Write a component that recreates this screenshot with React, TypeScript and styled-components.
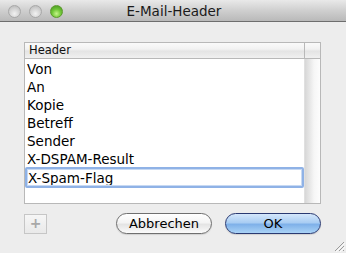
import React from 'react'
import styled, { createGlobalStyle } from 'styled-components'

const headers = ['Von', 'An', 'Kopie', 'Betreff', 'Sender', 'X-DSPAM-Result']

export default function App() {
  return (
    <>
      <Global />
      <S.Window>
        <S.TitleBar>
          <S.Lights>
            <S.Light />
            <S.Light />
            <S.Light green />
          </S.Lights>
          <S.Title>E-Mail-Header</S.Title>
        </S.TitleBar>

        <S.Body>
          <S.Table>
            <S.HeadRow>
              <S.HeadCell>Header</S.HeadCell>
              <S.HeadCorner />
            </S.HeadRow>
            <S.TableBody>
              <S.Rows>
                {headers.map(h => <S.Row key={h}>{h}</S.Row>)}
                <S.EditRow defaultValue='X-Spam-Flag' />
              </S.Rows>
              <S.Scroller />
            </S.TableBody>
          </S.Table>

          <S.Footer>
            <S.PlusButton>+</S.PlusButton>
            <S.Buttons>
              <S.PushButton>Abbrechen</S.PushButton>
              <S.PushButton primary>OK</S.PushButton>
            </S.Buttons>
          </S.Footer>
        </S.Body>

        <S.Grip>
          <svg width='11' height='11' viewBox='0 0 11 11'>
            <path d='M10 1 L1 10 M10 5 L5 10 M10 9 L9 10' stroke='#9a9a9a' strokeWidth='1' />
            <path d='M11 2 L2 11 M11 6 L6 11' stroke='#fafafa' strokeWidth='1' />
          </svg>
        </S.Grip>
      </S.Window>
    </>
  )
}

const Global = createGlobalStyle`
  body { margin: 0; }
  * { box-sizing: border-box; }
`

const S = {
  Window: styled.div`
    position: relative;
    width: 346px;
    height: 253px;
    background: #ededed;
    font-family: 'DejaVu Sans', 'Lucida Grande', sans-serif;
    overflow: hidden;
  `,

  TitleBar: styled.div`
    position: relative;
    height: 22px;
    display: flex;
    align-items: center;
    justify-content: center;
    background: linear-gradient(#e9e9e9, #cfcfcf 50%, #b9b9b9);
    border-bottom: 1px solid #6e6e6e;
  `,

  Lights: styled.div`
    position: absolute;
    left: 8px;
    top: 5px;
    display: flex;
    gap: 8px;
  `,

  Light: styled.div<{ green?: boolean }>`
    width: 13px;
    height: 13px;
    border-radius: 50%;
    border: 1px solid ${({ green }) => green ? '#5c9a2c' : '#a8a8a8'};
    background: ${({ green }) => green
      ? 'radial-gradient(circle at 50% 70%, #c6f58a, #73c83a 45%, #3f8f1c 100%)'
      : 'radial-gradient(circle at 50% 70%, #f2f2f2, #d4d4d4 50%, #b4b4b4 100%)'};
  `,

  Title: styled.div`
    font-size: 13.5px;
    color: #1a1a1a;
    padding-left: 2px;
  `,

  Body: styled.div`
    padding: 20px 25px 0 24px;
  `,

  Table: styled.div`
    height: 162px;
    border: 1px solid #b8b8b8;
    background: #fff;
    display: flex;
    flex-direction: column;
  `,

  HeadRow: styled.div`
    height: 16px;
    display: flex;
    border-bottom: 1px solid #b8b8b8;
    background: linear-gradient(#fafafa, #f2f2f2 40%, #e4e4e4 55%, #f0f0f0);
  `,

  HeadCell: styled.div`
    flex: 1;
    font-size: 11.5px;
    line-height: 15px;
    padding-left: 4px;
    color: #111;
    border-right: 1px solid #b8b8b8;
  `,

  HeadCorner: styled.div`
    width: 15px;
  `,

  TableBody: styled.div`
    flex: 1;
    display: flex;
  `,

  Rows: styled.div`
    flex: 1;
    padding-top: 1px;
  `,

  Row: styled.div`
    height: 18px;
    line-height: 18px;
    padding-left: 2px;
    font-size: 13.5px;
    color: #000;
  `,

  EditRow: styled.input`
    display: block;
    width: 100%;
    height: 21px;
    margin: -1px 0 0 0;
    padding: 0 0 0 1px;
    font-family: inherit;
    font-size: 13.5px;
    color: #000;
    border: 2px solid #8fb2e6;
    outline: 1px solid #c7d9f3;
    outline-offset: -3px;
    border-radius: 2px;
  `,

  Scroller: styled.div`
    width: 16px;
    background: linear-gradient(90deg, #d7d7d7, #e6e6e6 30%, #f6f6f6 60%, #fdfdfd);
    border-left: 1px solid #e0e0e0;
  `,

  Footer: styled.div`
    display: flex;
    align-items: center;
    justify-content: space-between;
    margin-top: 9px;
  `,

  PlusButton: styled.div`
    width: 23px;
    height: 20px;
    border: 1px solid #c6c6c6;
    background: linear-gradient(#f6f6f6, #e9e9e9);
    color: #a8a8a8;
    font-size: 14px;
    line-height: 17px;
    text-align: center;
    font-weight: bold;
  `,

  Buttons: styled.div`
    display: flex;
    gap: 13px;
  `,

  PushButton: styled.div<{ primary?: boolean }>`
    width: 96px;
    height: 21px;
    border-radius: 11px;
    font-size: 13px;
    line-height: 19px;
    text-align: center;
    color: #000;
    border: 1px solid ${({ primary }) => primary ? '#2a3a72' : '#6f6f6f'};
    background: ${({ primary }) => primary
      ? 'linear-gradient(#d5e7fb, #a9cdf3 45%, #7fb1e9 55%, #aad3f6)'
      : 'linear-gradient(#ffffff, #f4f4f4 45%, #e4e4e4 55%, #fbfbfb)'};
    box-shadow: 0 1px 1px rgba(0,0,0,0.12);
  `,

  Grip: styled.div`
    position: absolute;
    right: 1px;
    bottom: 1px;
    width: 11px;
    height: 11px;
    display: flex;
  `,
}
